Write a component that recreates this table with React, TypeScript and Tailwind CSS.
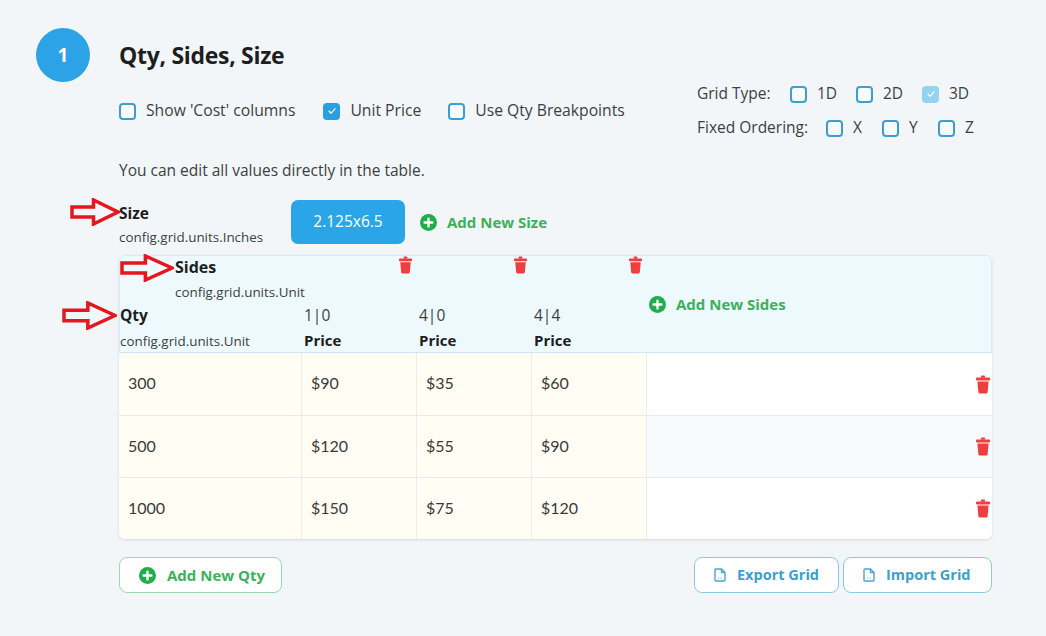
import React from "react";

const Trash = ({ className = "" }: { className?: string }) => (
  <svg viewBox="0 0 16 18" className={className} fill="#ef3e3e">
    <rect x="6" y="0" width="4" height="2.2" rx="0.8" />
    <rect x="1" y="2" width="14" height="3" rx="1" />
    <path d="M2.4 6 H13.6 L12.6 16.8 Q12.5 18 11.4 18 H4.6 Q3.5 18 3.4 16.8 Z" />
  </svg>
);

const Plus = () => (
  <svg viewBox="0 0 16 16" className="w-[17px] h-[17px] shrink-0">
    <circle cx="8" cy="8" r="8" fill="#21ad4b" />
    <path d="M8 4.3 V11.7 M4.3 8 H11.7" stroke="#fff" strokeWidth="2.2" strokeLinecap="round" />
  </svg>
);

const FileIcon = () => (
  <svg viewBox="0 0 12 14" className="w-[12px] h-[14px] shrink-0" fill="none" stroke="#49a6d3" strokeWidth="1.4">
    <path d="M2 1 H7.5 L11 4.5 V12 Q11 13 10 13 H2 Q1 13 1 12 V2 Q1 1 2 1 Z" />
    <path d="M7.5 1 V4.5 H11" />
    <path d="M4 10.2 H4.6 M6.8 10.2 H7.4" strokeWidth="1.6" />
  </svg>
);

const Box = ({ checked = false, light = false }: { checked?: boolean; light?: boolean }) => {
  if (checked) {
    return (
      <span
        className={`w-[17px] h-[17px] rounded-[4px] flex items-center justify-center shrink-0 ${
          light ? "bg-[#93d2f1]" : "bg-[#2a9fe0]"
        }`}
      >
        <svg viewBox="0 0 12 12" className="w-[10px] h-[10px]" fill="none" stroke="#fff" strokeWidth="1.6">
          <path d="M2.5 6.2 L5 8.6 L9.6 3.4" strokeLinecap="round" strokeLinejoin="round" />
        </svg>
      </span>
    );
  }
  return <span className="block w-[17px] h-[17px] rounded-[4px] border-2 border-[#3d9fcf] bg-[#f8fbfc] shrink-0" />;
};

const Arrow = ({ left, top, w, h }: { left: number; top: number; w: number; h: number }) => {
  const s1 = h * 0.32;
  const s2 = h * 0.68;
  const hb = w * 0.47;
  return (
    <svg
      className="absolute pointer-events-none"
      style={{ left, top }}
      width={w}
      height={h}
      viewBox={`0 0 ${w} ${h}`}
    >
      <polygon
        points={`2,${s1} ${hb},${s1} ${hb},2 ${w - 2},${h / 2} ${hb},${h - 2} ${hb},${s2} 2,${s2}`}
        fill="none"
        stroke="#e5161d"
        strokeWidth="3.5"
        strokeLinejoin="miter"
      />
    </svg>
  );
};

const rows = [
  { q: "300", v: ["$90", "$35", "$60"] },
  { q: "500", v: ["$120", "$55", "$90"] },
  { q: "1000", v: ["$150", "$75", "$120"] },
];

const sides = ["1|0", "4|0", "4|4"];

export default function App() {
  return (
    <div
      className="relative w-[1046px] h-[636px] overflow-hidden bg-[#f3f6f8] text-[#1c1f22]"
      style={{ fontFamily: "'Open Sans', 'Noto Sans', sans-serif" }}
    >
      {/* Title */}
      <div className="flex items-center pt-[28px] pl-[36px]">
        <div className="w-[54px] h-[54px] rounded-full bg-[#2ba3e6] flex items-center justify-center text-white text-[19px] font-bold">
          1
        </div>
        <div className="ml-[29px] text-[23px] font-bold tracking-[-0.3px]">Qty, Sides, Size</div>
      </div>

      <div className="ml-[119px] w-[873px]">
        {/* options */}
        <div className="flex items-start justify-between mt-0">
          <div className="flex items-center mt-[17px] h-[24px] text-[15.7px] text-[#3b3f44]">
            <Box />
            <span className="ml-[10px]">Show 'Cost' columns</span>
            <span className="ml-[28px]"><Box checked /></span>
            <span className="ml-[10px]">Unit Price</span>
            <span className="ml-[27px]"><Box /></span>
            <span className="ml-[10px]">Use Qty Breakpoints</span>
          </div>
          <div className="flex flex-col gap-[10px] mr-[17px] text-[15.5px] text-[#3b3f44] w-[278px]">
            <div className="flex items-center h-[24px]">
              <span className="w-[93px]">Grid Type:</span>
              <Box />
              <span className="ml-[10px] w-[39px]">1D</span>
              <Box />
              <span className="ml-[10px] w-[39px]">2D</span>
              <Box checked light />
              <span className="ml-[10px]">3D</span>
            </div>
            <div className="flex items-center h-[24px]">
              <span className="w-[129px]">Fixed Ordering:</span>
              <Box />
              <span className="ml-[10px] w-[29px]">X</span>
              <Box />
              <span className="ml-[10px] w-[29px]">Y</span>
              <Box />
              <span className="ml-[10px]">Z</span>
            </div>
          </div>
        </div>

        <div className="mt-[20px] text-[15.5px] leading-[20px] text-[#3b3f44]">
          You can edit all values directly in the table.
        </div>

        {/* Size row */}
        <div className="flex items-start mt-[20px]">
          <div className="w-[172px]">
            <div className="text-[15.5px] font-bold leading-[20px] pt-[3px]">Size</div>
            <div className="mt-[6px] text-[13.4px] leading-[16px] text-[#3b3f44]">config.grid.units.Inches</div>
          </div>
          <div className="w-[114px] h-[44px] rounded-[7px] bg-[#2aa6e8] text-white text-[15.5px] flex items-center justify-center">
            2.125x6.5
          </div>
          <div className="flex items-center h-[44px] ml-[15px] gap-[10px] text-[15px] font-bold text-[#3bb15a]">
            <Plus />
            <span>Add New Size</span>
          </div>
        </div>

        {/* Table card */}
        <div className="mt-[10px] rounded-[6px] bg-white shadow-[0_1px_3px_rgba(0,0,0,0.12)] overflow-hidden">
          <div className="grid grid-cols-[183px_115px_115px_115px_1fr] h-[98px] bg-[#eef9fd] border border-[#d4edf8] border-b-[#cfe6f2] rounded-t-[6px]">
            <div className="flex flex-col">
              <div className="pl-[55px] pt-[1px] text-[16px] font-bold leading-[20px]">Sides</div>
              <div className="pl-[55px] mt-[7px] text-[13.4px] leading-[16px] text-[#3b3f44]">config.grid.units.Unit</div>
              <div className="mt-[5px] text-[15.5px] font-bold leading-[20px]">Qty</div>
              <div className="mt-[8px] text-[13.4px] leading-[16px] text-[#3b3f44]">config.grid.units.Unit</div>
            </div>
            {sides.map((s) => (
              <div key={s} className="flex flex-col">
                <div className="flex justify-end pr-[5px] pt-[0px]">
                  <Trash className="w-[15px] h-[18px]" />
                </div>
                <div className="mt-[31px] text-[15.5px] leading-[20px] text-[#3b3f44] pl-[1px]">{s}</div>
                <div className="mt-[5px] text-[15px] font-bold leading-[20px] pl-[1px]">Price</div>
              </div>
            ))}
            <div className="flex items-center gap-[10px] pl-[1px] text-[15px] font-bold text-[#3bb15a]">
              <Plus />
              <span>Add New Sides</span>
            </div>
          </div>
          {rows.map((r, i) => (
            <div
              key={r.q}
              className={`grid grid-cols-[183px_115px_115px_115px_1fr] h-[62px] ${
                i > 0 ? "border-t border-[#e6eaed]" : ""
              }`}
              style={{ fontFamily: "Lato, 'Open Sans', sans-serif" }}
            >
              <div className="bg-[#fffdf4] border-r border-[#ebecec] flex items-center pl-[9px] pb-[2px] text-[16px] text-[#3a3a3a]">
                {r.q}
              </div>
              {r.v.map((v, j) => (
                <div
                  key={j}
                  className="bg-[#fffdf4] border-r border-[#ebecec] flex items-center pl-[9px] pb-[2px] text-[16px] text-[#3a3a3a]"
                >
                  {v}
                </div>
              ))}
              <div className={`flex items-center justify-end pr-[1px] ${i === 1 ? "bg-[#f8fafb]" : "bg-white"}`}>
                <Trash className="w-[16px] h-[19px]" />
              </div>
            </div>
          ))}
        </div>

        {/* Bottom buttons */}
        <div className="flex items-center mt-[18px]">
          <div className="w-[163px] h-[36px] rounded-[8px] border border-[#9bd7aa] bg-white flex items-center pl-[19px] gap-[11px] text-[15px] font-bold text-[#3bb15a]">
            <Plus />
            <span>Add New Qty</span>
          </div>
          <div className="ml-auto flex gap-[4px]">
            <div className="w-[145px] h-[36px] rounded-[8px] border border-[#8ccae3] bg-white flex items-center pl-[19px] gap-[11px] text-[14.5px] font-bold text-[#3c9fcd]">
              <FileIcon />
              <span>Export Grid</span>
            </div>
            <div className="w-[149px] h-[36px] rounded-[8px] border border-[#8ccae3] bg-white flex items-center pl-[19px] gap-[11px] text-[14.5px] font-bold text-[#3c9fcd]">
              <FileIcon />
              <span>Import Grid</span>
            </div>
          </div>
        </div>
      </div>

      <Arrow left={70} top={198} w={50} h={28} />
      <Arrow left={120} top={254} w={54} h={28} />
      <Arrow left={62} top={301} w={55} h={29} />
    </div>
  );
}
